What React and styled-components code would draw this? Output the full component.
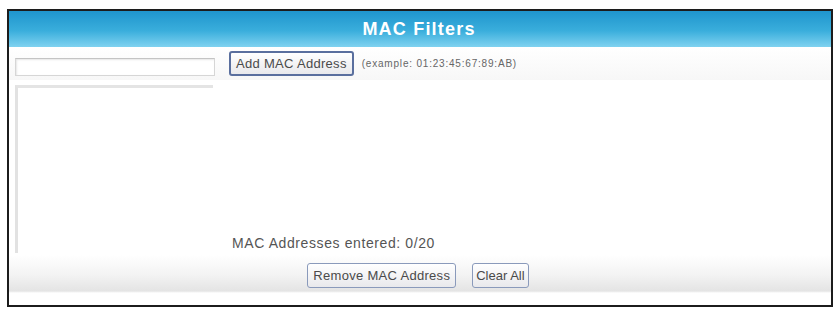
import React from "react";
import styled, { createGlobalStyle } from "styled-components";

const Global = createGlobalStyle`
  body {
    margin: 0;
    background: #fff;
    font-family: "Liberation Sans", Arial, sans-serif;
  }
`;

export default function App() {
  return (
    <>
      <Global />
      <Frame>
        <Header>MAC Filters</Header>
        <EntryRow>
          <AddressInput type="text" />
          <Button $focused>Add MAC Address</Button>
          <Hint>(example: 01:23:45:67:89:AB)</Hint>
        </EntryRow>
        <Main>
          <AddressList />
          <Count>MAC Addresses entered: 0/20</Count>
        </Main>
        <Footer>
          <Button>Remove MAC Address</Button>
          <Button $tight>Clear All</Button>
        </Footer>
      </Frame>
    </>
  );
}

const Frame = styled.div`
  margin: 9px 0 0 7px;
  width: 822px;
  height: 294px;
  border: 2px solid #1c1c1c;
  display: flex;
  flex-direction: column;
  background: #fff;
`;

const Header = styled.div`
  height: 36px;
  display: flex;
  align-items: center;
  justify-content: center;
  padding-right: 2px;
  color: #fff;
  font-weight: bold;
  font-size: 18px;
  letter-spacing: 1.2px;
  background: linear-gradient(#1f95cd 0%, #3aaedc 55%, #7fd2f0 100%);
`;

const EntryRow = styled.div`
  height: 33px;
  display: flex;
  align-items: center;
  padding: 0 6px;
  background: linear-gradient(#ffffff, #f7f7f7);
`;

const AddressInput = styled.input`
  box-sizing: border-box;
  width: 200px;
  height: 18px;
  margin-top: 7px;
  border: 1px solid #d6d6d6;
  border-top-color: #c4c4c4;
  box-shadow: inset 1px 1px 2px #e6e6e6;
  background: #fff;
`;

const Button = styled.button`
  box-sizing: border-box;
  height: 25px;
  padding: ${(p) => (p.$tight ? "0 3px" : "0 5px")};
  margin-left: ${(p) => (p.$focused ? "14px" : "0")};
  border: ${(p) => (p.$focused ? "2px solid #5a6f9e" : "1px solid #8a9abb")};
  border-radius: 3px;
  background: linear-gradient(#ffffff, #e9e9ec);
  font-family: "Liberation Sans", Arial, sans-serif;
  font-size: 13px;
  letter-spacing: ${(p) => (p.$tight ? "0" : "0.3px")};
  color: #4a4a4a;
`;

const Hint = styled.span`
  margin-left: 8px;
  font-size: 10px;
  letter-spacing: 0.8px;
  color: #666;
`;

const Main = styled.div`
  flex: 1;
  display: flex;
  align-items: flex-end;
  gap: 19px;
  padding: 5px 6px 0;
`;

const AddressList = styled.div`
  align-self: stretch;
  width: 198px;
  border-top: 3px solid #e4e4e4;
  border-left: 3px solid #e2e2e2;
  box-sizing: border-box;
  margin-bottom: 2px;
`;

const Count = styled.div`
  font-size: 14px;
  letter-spacing: 0.6px;
  color: #555;
  margin-bottom: 4px;
`;

const Footer = styled.div`
  height: 50px;
  display: flex;
  justify-content: center;
  gap: 16px;
  padding: 8px 4px 0 0;
  box-sizing: border-box;
  background: linear-gradient(
    #ffffff 0%,
    #f3f3f3 40%,
    #e4e4e4 72%,
    #ffffff 76%,
    #ffffff 100%
  );
`;
